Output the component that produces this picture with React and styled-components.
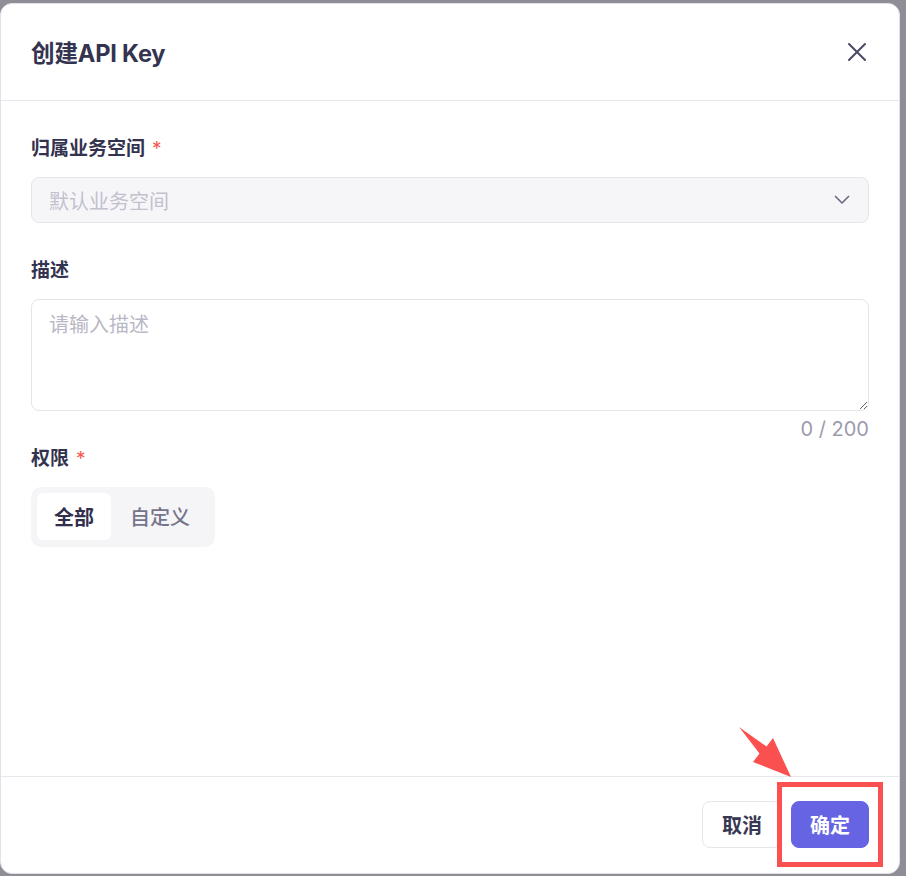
import React from "react";
import styled, { createGlobalStyle } from "styled-components";

const GlobalStyle = createGlobalStyle`
  html, body {
    margin: 0;
    padding: 0;
    background: #8f8e97;
    font-family: "Inter", "Noto Sans CJK SC", sans-serif;
  }
  * {
    box-sizing: border-box;
  }
`;

const Backdrop = styled.div`
  position: relative;
  width: 906px;
  height: 876px;
  padding-top: 3px;
  overflow: hidden;
  background: #8f8e97;
`;

const Modal = styled.div`
  width: 900px;
  height: 871px;
  display: flex;
  flex-direction: column;
  background: #fff;
  border: 1px solid #e2e1ea;
  border-radius: 12px;
  overflow: hidden;
`;

const Header = styled.div`
  height: 97px;
  flex-shrink: 0;
  display: flex;
  align-items: center;
  justify-content: space-between;
  padding: 0 30px;
  border-bottom: 1px solid #e7e7ee;
`;

const Title = styled.h2`
  margin: 0;
  font-size: 23.6px;
  font-weight: 700;
  color: #343350;
  letter-spacing: -0.2px;
`;

const CloseButton = styled.button`
  width: 24px;
  height: 24px;
  padding: 0;
  border: none;
  background: none;
  display: flex;
  align-items: center;
  justify-content: center;
  color: #4a4966;
  cursor: pointer;
`;

const Body = styled.div`
  flex: 1;
  padding: 34px 30px 0;
`;

const Field = styled.div`
  margin-bottom: ${(p) => p.$gap || 0}px;
`;

const Label = styled.div`
  font-size: 19px;
  font-weight: 600;
  line-height: 28px;
  color: #34334f;
  margin-bottom: 14px;
`;

const Required = styled.span`
  color: #f5574f;
  margin-left: 7px;
  font-weight: 400;
`;

const SelectBox = styled.div`
  height: 46px;
  display: flex;
  align-items: center;
  justify-content: space-between;
  padding: 0 18px 0 17px;
  background: #f6f6f9;
  border: 1px solid #e4e4ec;
  border-radius: 8px;
  font-size: 20px;
  color: #c2c1cd;
`;

const TextArea = styled.textarea`
  display: block;
  width: 100%;
  height: 112px;
  padding: 11px 17px;
  border: 1px solid #e4e4ec;
  border-radius: 8px;
  font-family: inherit;
  font-size: 20px;
  line-height: 28px;
  color: #34334f;
  outline: none;
  resize: vertical;

  &::placeholder {
    color: #b9b8c6;
  }
`;

const Counter = styled.div`
  margin-top: 5px;
  text-align: right;
  font-size: 20px;
  line-height: 26px;
  color: #9c9bae;
`;

const Segmented = styled.div`
  display: inline-flex;
  height: 60px;
  padding: 6px 6px 7px;
  background: #f5f5f8;
  border-radius: 10px;
`;

const Segment = styled.div`
  display: flex;
  align-items: center;
  padding: 0 ${(p) => (p.$active ? 17 : 19)}px;
  border-radius: 6px;
  font-size: 20px;
  font-weight: ${(p) => (p.$active ? 600 : 500)};
  color: ${(p) => (p.$active ? "#312f4d" : "#75748b")};
  background: ${(p) => (p.$active ? "#fff" : "transparent")};
`;

const Footer = styled.div`
  height: 97px;
  flex-shrink: 0;
  display: flex;
  justify-content: flex-end;
  align-items: flex-start;
  gap: 9px;
  padding: 24px 30px 0;
  border-top: 1px solid #e7e7ee;
`;

const Button = styled.button`
  height: 47px;
  padding: 0 ${(p) => (p.$primary ? 18 : 19)}px;
  border-radius: 8px;
  border: 1px solid ${(p) => (p.$primary ? "#6664e2" : "#e5e5ec")};
  background: ${(p) => (p.$primary ? "#6664e2" : "#fff")};
  color: ${(p) => (p.$primary ? "#fff" : "#383752")};
  font-family: inherit;
  font-size: 20px;
  font-weight: 700;
  cursor: pointer;
`;

/* red markup drawn over the confirm button */
const Highlight = styled.div`
  position: absolute;
  left: 777px;
  top: 782px;
  width: 106px;
  height: 85px;
  border: 5px solid #fb5050;
  pointer-events: none;
`;

const Arrow = styled.svg`
  position: absolute;
  left: 730px;
  top: 720px;
  pointer-events: none;
`;

function CloseIcon() {
  return (
    <svg width="20" height="20" viewBox="0 0 20 20" fill="none">
      <path d="M2 2L18 18M18 2L2 18" stroke="currentColor" strokeWidth="2" strokeLinecap="round" />
    </svg>
  );
}

function ChevronIcon() {
  return (
    <svg width="16" height="10" viewBox="0 0 16 10" fill="none">
      <path d="M1.5 1.5L8 8L14.5 1.5" stroke="#6d6c85" strokeWidth="1.7" strokeLinecap="round" strokeLinejoin="round" />
    </svg>
  );
}

export default function App() {
  return (
    <>
      <GlobalStyle />
      <Backdrop>
        <Modal>
          <Header>
            <Title>创建API Key</Title>
            <CloseButton aria-label="close">
              <CloseIcon />
            </CloseButton>
          </Header>

          <Body>
            <Field $gap={34}>
              <Label>
                归属业务空间<Required>*</Required>
              </Label>
              <SelectBox>
                <span>默认业务空间</span>
                <ChevronIcon />
              </SelectBox>
            </Field>

            <Field $gap={3}>
              <Label>描述</Label>
              <TextArea placeholder="请输入描述" />
              <Counter>0 / 200</Counter>
            </Field>

            <Field>
              <Label>
                权限<Required>*</Required>
              </Label>
              <Segmented>
                <Segment $active>全部</Segment>
                <Segment>自定义</Segment>
              </Segmented>
            </Field>
          </Body>

          <Footer>
            <Button>取消</Button>
            <Button $primary>确定</Button>
          </Footer>
        </Modal>

        <Arrow width="80" height="80" viewBox="730 720 80 80">
          <polygon
            points="739,727 766.5,746.4 773,738 791,777 753,762 759.5,753.6"
            fill="#fb5050"
          />
        </Arrow>
        <Highlight />
      </Backdrop>
    </>
  );
}
